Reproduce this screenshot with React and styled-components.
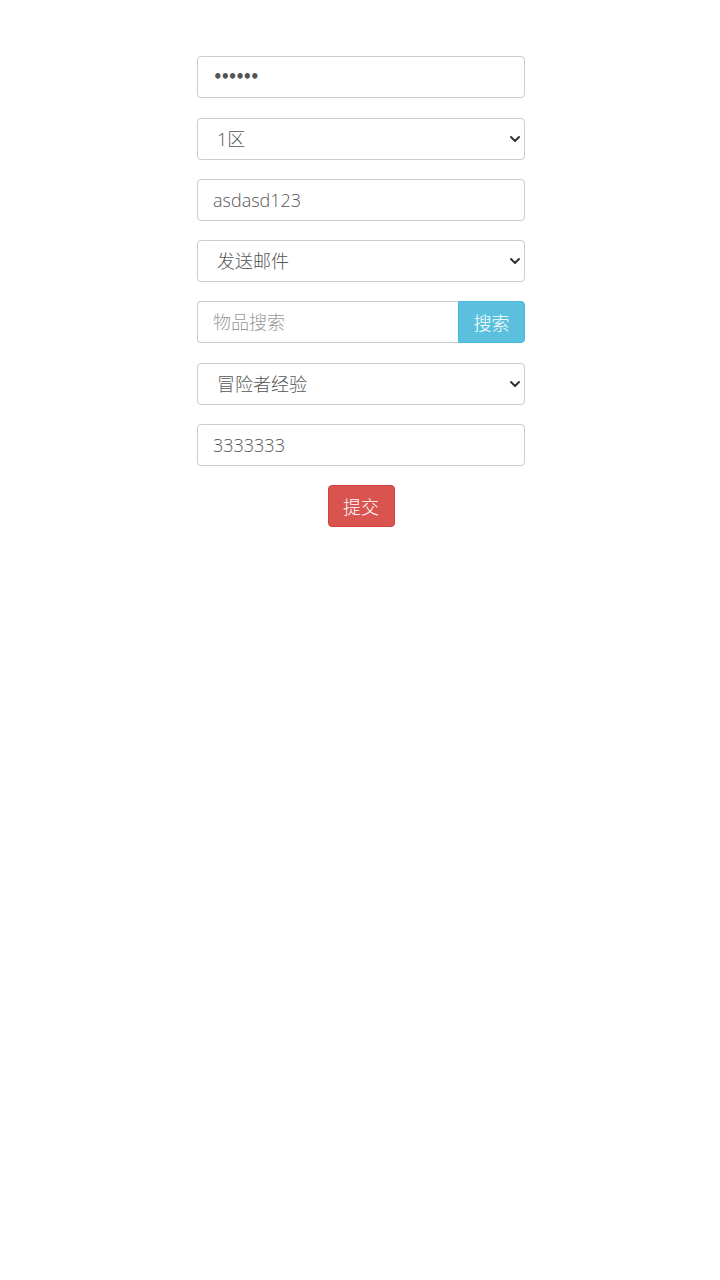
import React from 'react'
import styled, { createGlobalStyle } from 'styled-components'

const GlobalStyle = createGlobalStyle`
  html, body {
    margin: 0;
    padding: 0;
    background: #fff;
  }
  body {
    font-family: "Open Sans", "Noto Sans CJK SC", sans-serif;
  }
`

const Form = styled.form`
  width: 328px;
  margin: 0 0 0 calc(50% - 163px);
  padding-top: 56.3px;
  display: flex;
  flex-direction: column;
  gap: 19.3px;
`

const Field = styled.input`
  box-sizing: border-box;
  width: 100%;
  height: 42px;
  padding: 0 15px;
  border: 1px solid #ccc;
  border-radius: 4px;
  font-family: ${({ $dots }) => ($dots ? '"DejaVu Sans", sans-serif' : '"Open Sans", "Noto Sans CJK SC", sans-serif')};
  font-weight: ${({ $dots }) => ($dots ? 700 : 300)};
  font-size: ${({ $dots }) => ($dots ? '15px' : '18px')};
  color: #555;
  background: #fff;
  outline: none;
  letter-spacing: ${({ $dots }) => ($dots ? '-2.2px' : '0')};

  &::placeholder {
    color: #999;
  }
`

const SelectWrap = styled.div`
  position: relative;
  height: 42px;
`

const Select = styled.select`
  box-sizing: border-box;
  width: 100%;
  height: 42px;
  padding: 0 15px 0 19px;
  border: 1px solid #ccc;
  border-radius: 4px;
  font-family: "Open Sans", "Noto Sans CJK SC", sans-serif;
  font-weight: 300;
  font-size: 18px;
  color: #555;
  background: #fff;
  appearance: none;
  outline: none;
`

const Chevron = styled.svg`
  position: absolute;
  right: 4px;
  top: 16px;
  width: 12px;
  height: 10px;
  pointer-events: none;
`

const Group = styled.div`
  display: flex;
  height: 42px;

  ${Field} {
    flex: 1;
    border-radius: 4px 0 0 4px;
    border-right: none;
  }
`

const Btn = styled.button`
  box-sizing: border-box;
  height: 42px;
  width: 67px;
  padding: 0;
  border: 1px solid ${({ $tone }) => ($tone === 'info' ? '#46b8da' : '#d43f3a')};
  background: ${({ $tone }) => ($tone === 'info' ? '#5bc0de' : '#d9534f')};
  color: #fff;
  font-family: "Open Sans", "Noto Sans CJK SC", sans-serif;
  font-size: 18px;
  font-weight: 300;
  border-radius: ${({ $tone }) => ($tone === 'info' ? '0 4px 4px 0' : '4px')};
  cursor: pointer;
`

const Actions = styled.div`
  display: flex;
  justify-content: center;
`

const DropSelect = ({ value, options }) => (
  <SelectWrap>
    <Select defaultValue={value}>
      {options.map((o) => (
        <option key={o}>{o}</option>
      ))}
    </Select>
    <Chevron viewBox="0 0 12 10">
      <path d="M2 3l4 4 4-4" fill="none" stroke="#333" strokeWidth="2" strokeLinecap="round" strokeLinejoin="round" />
    </Chevron>
  </SelectWrap>
)

export default function App() {
  return (
    <>
      <GlobalStyle />
      <Form onSubmit={(e) => e.preventDefault()}>
        <Field type="password" defaultValue="123456" $dots />
        <DropSelect value="1区" options={['1区', '2区', '3区']} />
        <Field type="text" defaultValue="asdasd123" />
        <DropSelect value="发送邮件" options={['发送邮件', '发送物品']} />
        <Group>
          <Field type="text" placeholder="物品搜索" />
          <Btn type="button" $tone="info">搜索</Btn>
        </Group>
        <DropSelect value="冒险者经验" options={['冒险者经验', '金币']} />
        <Field type="text" defaultValue="3333333" />
        <Actions>
          <Btn type="submit" $tone="danger">提交</Btn>
        </Actions>
      </Form>
    </>
  )
}
